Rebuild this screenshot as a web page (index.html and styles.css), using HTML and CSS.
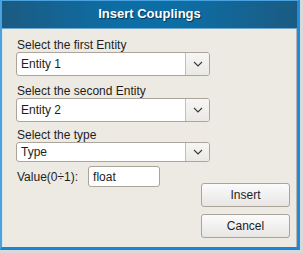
FILE: index.html
```html
<!DOCTYPE html>
<html>
<head>
	<meta charset="utf-8" />
	<title>Insert Couplings</title>
	<link rel="stylesheet" href="styles.css">
</head>
<body>
	<div class="dialog">
		<div class="title">Insert Couplings</div>
		<div class="content">
			<div class="field">
				<label>Select the first Entity</label>
				<div class="combo">
					<span class="combo-value">Entity 1</span>
					<span class="combo-btn"><svg width="10" height="6" viewBox="0 0 10 6"><path d="M1 1 L5 5 L9 1" /></svg></span>
				</div>
			</div>
			<div class="field second">
				<label>Select the second Entity</label>
				<div class="combo">
					<span class="combo-value">Entity 2</span>
					<span class="combo-btn"><svg width="10" height="6" viewBox="0 0 10 6"><path d="M1 1 L5 5 L9 1" /></svg></span>
				</div>
			</div>
			<div class="field third">
				<label>Select the type</label>
				<div class="combo small">
					<span class="combo-value">Type</span>
					<span class="combo-btn"><svg width="10" height="6" viewBox="0 0 10 6"><path d="M1 1 L5 5 L9 1" /></svg></span>
				</div>
			</div>
			<div class="bottom">
				<div class="value-row">
					<label>Value(0÷1):</label>
					<input class="value-input" type="text" value="float">
				</div>
				<div class="actions">
					<button class="btn">Insert</button>
					<button class="btn">Cancel</button>
				</div>
			</div>
		</div>
	</div>
</body>
</html>
```

FILE: styles.css
```css
* { margin:0; padding:0; box-sizing:border-box; }
html, body { width:303px; height:253px; overflow:hidden; }
body { background:#d9d9d9; font-family:"Liberation Sans", Arial, sans-serif; font-size:12px; color:#1e1e1e; }

.dialog { width:300px; height:250px; display:flex; flex-direction:column;
	border-left:2px solid #4aa3df; border-top:1px solid #4aa3df; border-right:3px solid #1b8ce0; border-bottom:3px solid #1a84d6; }

.title { height:28px; border-bottom:1px solid #6fa9cf; color:#fff; font-weight:bold; font-size:13px;
	text-align:center; line-height:26px; text-shadow:1px 1px 1px rgba(0,0,0,.55);
	background:linear-gradient(to right, #1b5b82 0%, #0d6ea6 40%, #0d6ea6 60%, #1b5b82 100%); }

.content { flex:1; background:#edeae4; border-left:1px solid #dfe6ea; border-right:1px solid #b9b5ae;
	padding:9px 6px 0 13px; }

.field { width:194px; }
.field label { display:block; height:14px; line-height:14px; padding-left:1px; }
.field.second { margin-top:8px; }
.field.third { margin-top:6px; }

.combo { display:flex; height:24px; background:#fff; border:1px solid #aaa49b; border-radius:3px; overflow:hidden; }
.combo.small { height:20px; }
.combo-value { flex:1; line-height:22px; padding-left:4px; }
.combo.small .combo-value { line-height:18px; }
.combo-btn { width:24px; border-left:1px solid #c3beb6; display:flex; align-items:center; justify-content:center;
	background:linear-gradient(#f7f6f4, #ebe9e5); }
.combo-btn svg path { fill:none; stroke:#3a3a3a; stroke-width:1.1; }

.bottom { display:flex; justify-content:space-between; margin-top:4px; }
.value-row { display:flex; align-items:center; height:21px; padding-left:1px; }
.value-input { width:72px; height:21px; margin-left:10px; border:1px solid #aaa49b; border-radius:3px;
	background:#fff; font:12px "Liberation Sans", Arial, sans-serif; color:#1e1e1e; padding-left:4px; outline:none; }

.actions { display:flex; flex-direction:column; gap:7px; padding-top:17px; }
.btn { width:89px; height:24px; border:1px solid #aaa49b; border-radius:3px;
	background:linear-gradient(#fbfbfb, #e7e6e4); font:12px "Liberation Sans", Arial, sans-serif; color:#1e1e1e; }
```
